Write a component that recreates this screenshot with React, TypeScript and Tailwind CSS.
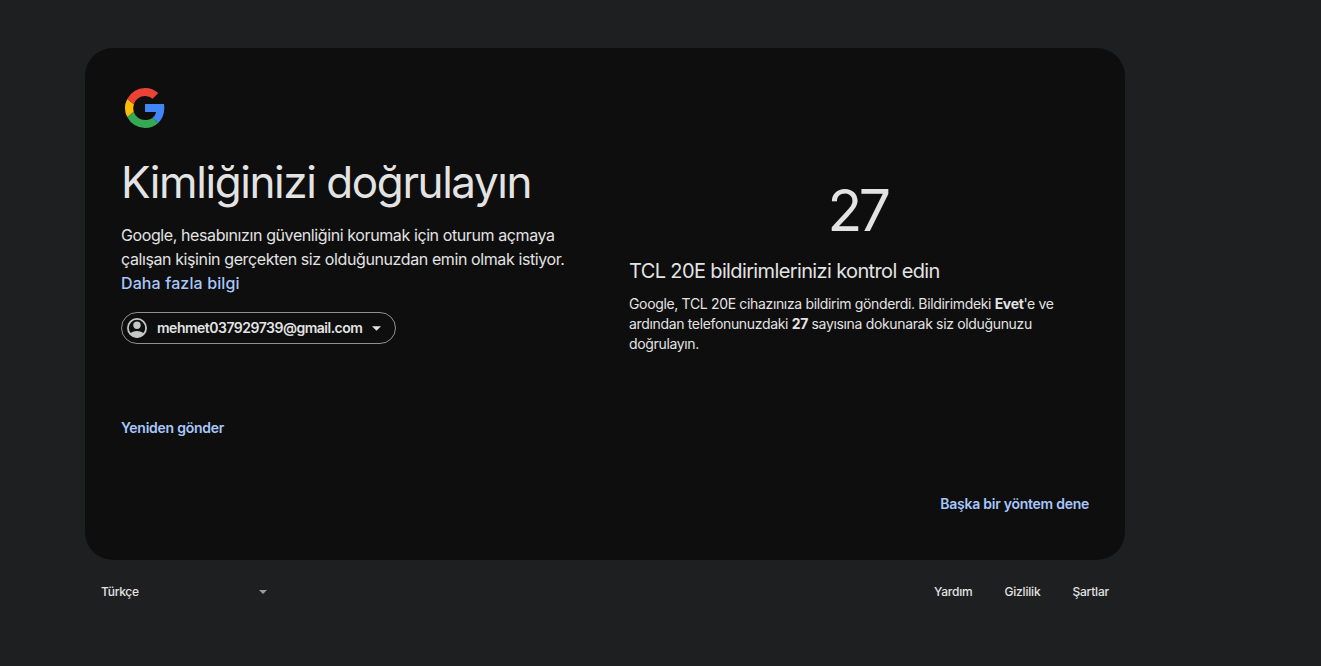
import type { ReactElement, ReactNode } from "react";

const FOOTER_LINKS = ["Yardım", "Gizlilik", "Şartlar"];

export default function App(): ReactElement {
  return (
    <div className="min-h-screen bg-[#1e1f20] pl-[85px] pt-12 font-['Inter','Noto_Sans',sans-serif] text-[#e3e3e3]">
      <div className="w-[1040px]">
        <main className="flex h-[512px] flex-col rounded-[28px] bg-[#0e0e0e] p-9">
          <GoogleLogo />
          <div className="flex">
            <section className="w-[508px]">
              <h1 className="mt-6 whitespace-nowrap text-[44px] leading-[52px] tracking-[-1.42px]">
                Kimliğinizi doğrulayın
              </h1>
              <p className="mt-[15px] whitespace-nowrap text-base leading-6 tracking-[-0.4px]">
                Google, hesabınızın güvenliğini korumak için oturum açmaya
                <br />
                çalışan kişinin gerçekten siz olduğunuzdan emin olmak istiyor.
                <br />
                <a href="#" className="font-medium tracking-[0.12px] text-[#a8c7fa]">
                  Daha fazla bilgi
                </a>
              </p>
              <AccountChip email="mehmet037929739@gmail.com" />
              <div className="mt-[74px]">
                <TextButton>Yeniden gönder</TextButton>
              </div>
            </section>
            <section className="w-[460px] pt-[47px]">
              <div className="pr-[3px] text-center text-[57px] leading-16 tracking-[-3.5px]">27</div>
              <h2 className="mt-3 whitespace-nowrap text-xl leading-8 tracking-[-0.63px]">
                TCL 20E bildirimlerinizi kontrol edin
              </h2>
              <p className="mt-[7px] whitespace-nowrap text-sm leading-5 tracking-[-0.34px]">
                Google, TCL 20E cihazınıza bildirim gönderdi. Bildirimdeki <strong>Evet</strong>'e ve
                <br />
                ardından telefonunuzdaki <strong>27</strong> sayısına dokunarak siz olduğunuzu
                <br />
                doğrulayın.
              </p>
            </section>
          </div>
          <div className="mt-auto flex justify-end pb-[10px]">
            <TextButton>Başka bir yöntem dene</TextButton>
          </div>
        </main>
        <footer className="flex items-center justify-between px-4 pt-6 text-xs font-medium leading-4 tracking-[-0.35px]">
          <button type="button" className="flex w-[170px] items-center justify-between pr-1">
            <span>Türkçe</span>
            <Caret className="h-1 w-2 text-[#9a9b9c]" />
          </button>
          <nav className="flex gap-8 tracking-[-0.2px]">
            {FOOTER_LINKS.map((label) => (
              <a key={label} href="#">
                {label}
              </a>
            ))}
          </nav>
        </footer>
      </div>
    </div>
  );
}

function TextButton({ children }: { children: ReactNode }): ReactElement {
  return (
    <button
      type="button"
      className="block whitespace-nowrap text-sm font-semibold leading-5 tracking-[-0.26px] text-[#a8c7fa]"
    >
      {children}
    </button>
  );
}

function AccountChip({ email }: { email: string }): ReactElement {
  return (
    <button
      type="button"
      className="mt-[17px] flex h-8 w-[275px] items-center rounded-full border border-[#8e918f] pl-[5px] text-sm font-semibold"
    >
      <svg viewBox="0 0 20 20" className="size-5 shrink-0" fill="#c4c7c5">
        <circle cx="10" cy="10" r="9.1" fill="none" stroke="#c4c7c5" strokeWidth="1.8" />
        <circle cx="10" cy="7.2" r="3.7" />
        <path d="M2.5 15.800C4.500 13.900 7.100 12.900 10 12.900s5.500 1 7.500 2.900A9.400 9.400 0 0 1 10 19.400a9.400 9.400 0 0 1-7.500-3.600Z" />
      </svg>
      <span className="ml-[10px] w-[206px] whitespace-nowrap text-left tracking-[-0.5px]">{email}</span>
      <Caret className="ml-[9px] h-[5px] w-[9px]" />
    </button>
  );
}

function Caret({ className }: { className: string }): ReactElement {
  return (
    <svg viewBox="0 0 8 4" className={className} fill="currentColor">
      <path d="M0 0h8L4 4Z" />
    </svg>
  );
}

function GoogleLogo(): ReactElement {
  return (
    <svg viewBox="0 0 48 48" className="size-12 shrink-0">
      <path fill="#4285F4" d="M24 20h19c.2 1.200.3 2.600.3 4 0 6.200-2.100 11.200-5.800 14.700l-6.200-4.800c1.900-1.300 3.300-3.300 3.800-5.900H24Z" />
      <path fill="#34A853" d="M37.500 38.700A19.500 19.500 0 0 1 24 44 20 20 0 0 1 6.200 33l6.500-5.200A12 12 0 0 0 24 36c2.900 0 5.400-.8 7.300-2.100Z" />
      <path fill="#FBBC05" d="M6.200 33A20 20 0 0 1 6.200 15l6.700 5.200a12 12 0 0 0-.2 7.600Z" />
      <path fill="#EA4335" d="M6.200 15A20 20 0 0 1 24 4c5.200 0 9.700 1.900 13.300 5.100L31.600 14.800A11.300 11.300 0 0 0 24 12a11.800 11.800 0 0 0-11.100 8.200Z" />
    </svg>
  );
}
